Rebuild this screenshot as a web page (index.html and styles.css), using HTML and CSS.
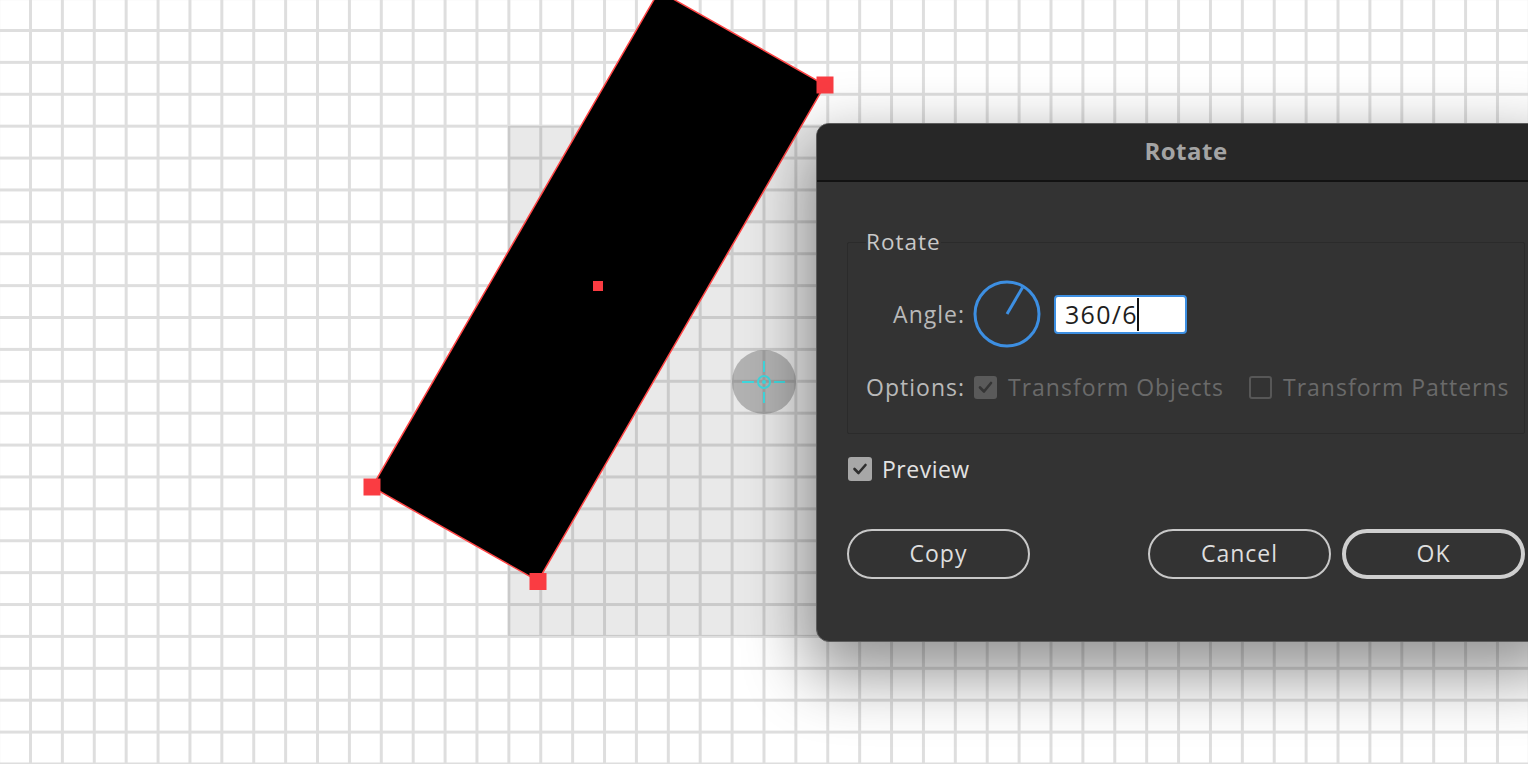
FILE: index.html
```html
<!DOCTYPE html>
<html lang="en">
<head>
<meta charset="utf-8">
<title>Rotate</title>
<link rel="stylesheet" href="styles.css">
</head>
<body>
<div class="canvas">
  <div class="selection-area"></div>

  <svg class="artwork" width="1528" height="764" viewBox="0 0 1528 764">
    <polygon points="659,-9 825,85 538,581 372,487" fill="#000" stroke="#ff4646" stroke-width="1.5"/>
    <rect x="816.5" y="76.5" width="17" height="17" fill="#fa3c42"/>
    <rect x="529.5" y="573" width="17" height="17" fill="#fa3c42"/>
    <rect x="363.5" y="478.5" width="17" height="17" fill="#fa3c42"/>
    <rect x="593" y="281" width="10" height="10" fill="#fa3c42"/>
  </svg>

  <svg class="origin" width="66" height="66" viewBox="0 0 66 66">
    <circle cx="33" cy="33" r="32" fill="rgba(90,90,90,0.38)"/>
    <g stroke="#3fd8de" stroke-width="2" fill="none">
      <circle cx="33" cy="33" r="6"/>
      <line x1="33" y1="12" x2="33" y2="23"/>
      <line x1="33" y1="43" x2="33" y2="54"/>
      <line x1="11" y1="33" x2="23" y2="33"/>
      <line x1="43" y1="33" x2="54" y2="33"/>
    </g>
    <circle cx="33" cy="33" r="2" fill="#3fd8de"/>
  </svg>

  <div class="dialog">
    <div class="titlebar">Rotate</div>
    <div class="dialog-body">
      <fieldset class="group">
        <legend class="group-title">Rotate</legend>
        <div class="row angle-row">
          <span class="label">Angle:</span>
          <svg class="dial" width="70" height="70" viewBox="0 0 70 70">
            <circle cx="35" cy="35" r="32" fill="none" stroke="#3d8fe2" stroke-width="3"/>
            <line x1="35" y1="35" x2="50.5" y2="8.5" stroke="#3d8fe2" stroke-width="3"/>
          </svg>
          <div class="angle-input"><span class="value">360/6</span><span class="caret"></span></div>
        </div>
        <div class="row options-row">
          <span class="label">Options:</span>
          <span class="checkbox checked disabled">
            <svg width="23" height="23" viewBox="0 0 23 23"><path d="M6 11.5 L10 15.5 L17 7" fill="none" stroke="#353535" stroke-width="2.6" stroke-linecap="round" stroke-linejoin="round"/></svg>
          </span>
          <span class="option-text">Transform Objects</span>
          <span class="checkbox unchecked disabled"></span>
          <span class="option-text">Transform Patterns</span>
        </div>
      </fieldset>

      <div class="preview-row">
        <span class="checkbox checked preview-box">
          <svg width="24" height="24" viewBox="0 0 24 24"><path d="M6.5 12 L10.5 16 L17.5 8" fill="none" stroke="#2e2e2e" stroke-width="2.6" stroke-linecap="round" stroke-linejoin="round"/></svg>
        </span>
        <span class="preview-text">Preview</span>
      </div>

      <div class="buttons">
        <button class="btn">Copy</button>
        <div class="spacer"></div>
        <button class="btn">Cancel</button>
        <button class="btn primary">OK</button>
      </div>
    </div>
  </div>
</div>
</body>
</html>
```

FILE: styles.css
```css
* { box-sizing: border-box; }

html, body {
  margin: 0;
  padding: 0;
  width: 1528px;
  height: 764px;
  overflow: hidden;
}

body {
  font-family: "Open Sans", "Liberation Sans", sans-serif;
}

.canvas {
  position: relative;
  width: 1528px;
  height: 764px;
  overflow: hidden;
  background-color: #ffffff;
  background-image:
    linear-gradient(to right, #dedede 3px, transparent 3px),
    linear-gradient(to bottom, #dedede 3px, transparent 3px);
  background-size: 31.9px 31.9px;
  background-position: 29px 29px;
}

.selection-area {
  position: absolute;
  left: 508px;
  top: 126px;
  width: 400px;
  height: 510px;
  background: rgba(0, 0, 0, 0.085);
}

.artwork {
  position: absolute;
  left: 0;
  top: 0;
}

.origin {
  position: absolute;
  left: 731px;
  top: 349px;
}

.dialog {
  position: absolute;
  left: 816px;
  top: 123px;
  width: 740px;
  height: 519px;
  background: #333333;
  border: 1px solid #5c5c5c;
  border-radius: 13px;
  overflow: hidden;
  box-shadow: 0 26px 64px 8px rgba(0, 0, 0, 0.42);
  display: flex;
  flex-direction: column;
}

.titlebar {
  height: 58px;
  flex: none;
  background: #272727;
  border-bottom: 2px solid #121212;
  color: #a4a4a4;
  font-weight: 700;
  font-size: 24px;
  letter-spacing: 0.5px;
  display: flex;
  align-items: center;
  justify-content: center;
  padding-bottom: 3px;
}

.dialog-body {
  padding: 46px 30px 0 30px;
  display: flex;
  flex-direction: column;
}

.group {
  margin: 0;
  padding: 23px 0 31px 18px;
  border: 1px solid #2b2b2b;
  border-radius: 2px;
  min-width: 0;
}

.group-title {
  padding: 0;
  font-size: 22.5px;
  letter-spacing: 1px;
  line-height: 28px;
  color: #c9c9c9;
  font-weight: 500;
}

.row {
  display: flex;
  align-items: center;
}

.label {
  width: 99px;
  text-align: right;
  font-size: 23px;
  letter-spacing: 1px;
  color: #b9b9b9;
  font-weight: 500;
  flex: none;
}

.dial {
  margin-left: 7px;
  flex: none;
}

.angle-input {
  margin-left: 12px;
  width: 133px;
  height: 39px;
  background: #ffffff;
  border: 2px solid #3d8fe2;
  border-radius: 4px;
  display: flex;
  align-items: center;
  padding-left: 9px;
}

.value {
  font-size: 25px;
  letter-spacing: 1.3px;
  color: #1e1e1e;
  line-height: 1;
}

.caret {
  width: 2px;
  height: 33px;
  background: #111;
  margin-left: -1px;
}

.options-row {
  margin-top: 23px;
  height: 30px;
}

.checkbox {
  flex: none;
  display: inline-flex;
  align-items: center;
  justify-content: center;
  border-radius: 3px;
}

.checkbox.checked.disabled {
  width: 23px;
  height: 23px;
  background: #5a5a5a;
  margin-left: 9px;
}

.checkbox.unchecked.disabled {
  width: 23px;
  height: 23px;
  border: 2px solid #575757;
  margin-left: 25px;
}

.option-text {
  font-size: 23px;
  letter-spacing: 1px;
  color: #6a6a6a;
  font-weight: 500;
  margin-left: 11px;
}

.preview-row {
  margin-top: 19px;
  display: flex;
  align-items: center;
  padding-left: 1px;
}

.preview-box {
  width: 24px;
  height: 24px;
  background: #a7a7a7;
}

.preview-text {
  margin-left: 10px;
  font-size: 23px;
  letter-spacing: 0.5px;
  font-weight: 500;
  color: #e2e2e2;
}

.buttons {
  margin-top: 44px;
  display: flex;
  align-items: center;
  gap: 11px;
}

.spacer {
  flex: 1;
}

.btn {
  width: 183px;
  height: 50px;
  border-radius: 26px;
  background: transparent;
  border: 2px solid #c8c8c8;
  color: #dedede;
  font-family: "Open Sans", "Liberation Sans", sans-serif;
  font-size: 23px;
  letter-spacing: 1px;
  font-weight: 500;
  display: flex;
  align-items: center;
  justify-content: center;
  padding: 0 0 2px 0;
}

.btn.primary {
  border: 4px solid #cfcfcf;
}
```
